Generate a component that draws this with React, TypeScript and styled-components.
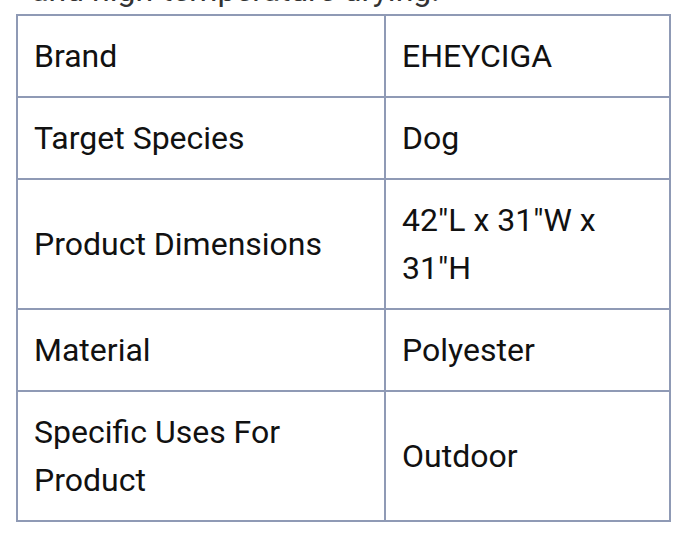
import React from "react";
import styled, { createGlobalStyle } from "styled-components";

const Global = createGlobalStyle`
  html, body { margin: 0; padding: 0; background: #ffffff; }
  body { font-family: Roboto, "Noto Sans", sans-serif; color: #111; overflow: hidden; }
`;

const Page = styled.div`
  width: 688px;
  height: 543px;
  overflow: hidden;
  box-sizing: border-box;
  padding: 0 17px 0 16px;
`;

const Lead = styled.p`
  margin: -34px 0 0 15px;
  font-size: 32px;
  line-height: 48px;
  height: 48px;
  color: #333;
  white-space: nowrap;
`;

const Table = styled.table`
  border-collapse: collapse;
  width: 655px;
  font-size: 32px;
  line-height: 48px;
  color: #111;
`;

const Cell = styled.td<{ $w: number }>`
  border: 2px solid #8f9ab5;
  padding: 16px;
  width: ${(p) => p.$w}px;
  vertical-align: middle;
  text-align: left;
`;

const rows: [string, React.ReactNode][] = [
  ["Brand", "EHEYCIGA"],
  ["Target Species", "Dog"],
  ["Product Dimensions", <>42"L x 31"W x 31"H</>],
  ["Material", "Polyester"],
  ["Specific Uses For Product", "Outdoor"],
];

export default function App() {
  return (
    <Page>
      <Global />
      <Lead>and high-temperature drying.</Lead>
      <Table>
        <tbody>
          {rows.map(([k, v], i) => (
            <tr key={i}>
              <Cell $w={334}>{k}</Cell>
              <Cell $w={251}>{v}</Cell>
            </tr>
          ))}
        </tbody>
      </Table>
    </Page>
  );
}
